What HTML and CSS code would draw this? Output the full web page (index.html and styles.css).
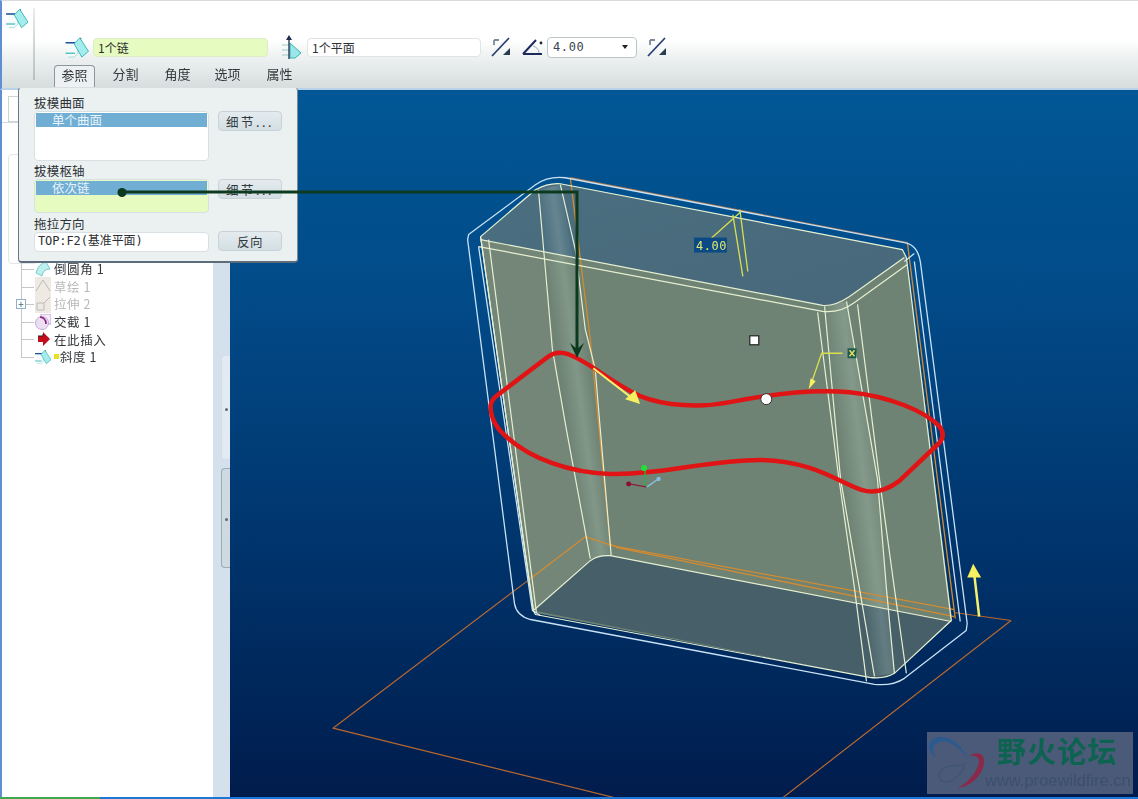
FILE: index.html
```html
<!DOCTYPE html>
<html lang="zh">
<head>
<meta charset="utf-8">
<title>拔模</title>
<link rel="stylesheet" href="styles.css">
</head>
<body>
<svg class="defs" width="0" height="0" aria-hidden="true">
  <symbol id="draft" viewBox="0 0 24 22">
    <path d="M3 6H13V17L9 21H3" fill="#f4fbfb" stroke="#8fd0d0" stroke-width=".8"/>
    <path d="M0 6H13L16 1" fill="none" stroke="#1f4f9a" stroke-width="1.7"/>
    <path d="M0 17H10" fill="none" stroke="#39b8b8" stroke-width="1.3"/>
    <path d="M15 1L24 15L17 21L9 7Z" fill="#a5ecec" stroke="#38b4b4" stroke-width="1"/>
  </symbol>
  <symbol id="flip" viewBox="0 0 20 20">
    <path d="M1 19L18 1" stroke="#2a3f75" stroke-width="1.8" fill="none"/>
    <path d="M3 3H8M3 3V8" stroke="#7c8a9a" stroke-width="1.8" fill="none"/>
    <path d="M19 18H12L19 11Z" fill="#2a3c50"/>
  </symbol>
</svg>
<div class="page">
  <header class="toolbar">
    <div class="toolbar-side">
      <svg class="icon-side"><use href="#draft"/></svg>
      <span class="toolbar-sep"></span>
    </div>
    <div class="toolbar-main">
      <div class="control-row">
        <svg class="icon-draft"><use href="#draft"/></svg>
        <div class="field field-green">1个链</div>
        <svg class="icon-pull" viewBox="0 0 22 24">
          <path d="M2 10H9M2 15H9M2 20H9" stroke="#9ccaca" stroke-width="1"/>
          <path d="M10 8L21 18L15 23H10Z" fill="#9be6e6" stroke="#38b4b4"/>
          <path d="M9 24V3" stroke="#1c2c4c" stroke-width="1.3"/>
          <path d="M9 0L6 5H12Z" fill="#1c2c4c"/>
        </svg>
        <div class="field field-white">1个平面</div>
        <svg class="icon-flip"><use href="#flip"/></svg>
        <svg class="icon-angle" viewBox="0 0 24 18">
          <path d="M1 16L14 2M1 16H20" stroke="#1f2a5c" stroke-width="2" fill="none"/>
          <path d="M11 8Q17 10 17 15" stroke="#9aa" fill="none"/>
          <circle cx="19" cy="5" r="1.4" fill="#223"/>
        </svg>
        <div class="select"><span>4.00</span><span class="caret"></span></div>
        <svg class="icon-flip icon-flip-end"><use href="#flip"/></svg>
      </div>
      <nav class="tabs">
        <span class="tab tab-active">参照</span>
        <span class="tab tab-split">分割</span>
        <span class="tab tab-angle">角度</span>
        <span class="tab tab-opt">选项</span>
        <span class="tab tab-prop">属性</span>
      </nav>
    </div>
  </header>

  <main class="workspace">
    <aside class="tree-panel">
      <div class="panel-tab"></div>
      <div class="panel-rule"></div>
      <div class="panel-box"></div>
      <ul class="tree">
        <li class="tree-row"><svg class="t-icon" viewBox="0 0 16 16"><path d="M1 12Q3 3 11 1L15 8Q8 8 7 15Z" fill="#bfeeee" stroke="#7cc"/></svg><span>倒圆角 1</span></li>
        <li class="tree-row is-muted"><svg class="t-icon" viewBox="0 0 16 18" preserveAspectRatio="none"><rect width="16" height="18" fill="#eee9e2"/><path d="M1 14L8 3L15 14" fill="none" stroke="#bbb"/></svg><span>草绘 1</span></li>
        <li class="tree-row is-muted"><span class="plus">+</span><svg class="t-icon" viewBox="0 0 16 18" preserveAspectRatio="none"><rect width="16" height="18" fill="#eee9e2"/><path d="M2 15V8H9L15 2M9 8V15H2" fill="none" stroke="#bbb"/></svg><span>拉伸 2</span></li>
        <li class="tree-row"><svg class="t-icon" viewBox="0 0 16 16"><rect x="6" y="0" width="10" height="10" fill="#f5ecf8" stroke="#b9a4d8"/><circle cx="7" cy="9" r="6.5" fill="#ecdff2" stroke="#c3a9d8"/><path d="M5 3Q11 4 11 10" fill="none" stroke="#8a1f7f" stroke-width="1.6"/></svg><span>交截 1</span></li>
        <li class="tree-row"><svg class="t-icon" viewBox="0 0 16 16"><path d="M3 5H8V1L15 8L8 15V11H3Z" fill="#c40d1c"/><path d="M3 5H8V3" fill="none" stroke="#222"/></svg><span>在此插入</span></li>
        <li class="tree-row"><svg class="t-icon" viewBox="0 0 24 22"><use href="#draft"/></svg><span class="star"></span><span>斜度 1</span></li>
      </ul>
    </aside>
    <div class="splitter">
      <span class="grip grip-a"></span>
      <span class="grip grip-b"></span>
    </div>
    <section class="viewport">
      <svg class="model" viewBox="230 90 908 709" xmlns="http://www.w3.org/2000/svg">
        <defs>
          <linearGradient id="stripe-l" gradientUnits="userSpaceOnUse" x1="560" y1="375" x2="590" y2="371">
            <stop offset="0" stop-color="#cfe6d6" stop-opacity="0"/>
            <stop offset=".55" stop-color="#cfe6d6" stop-opacity=".2"/>
            <stop offset="1" stop-color="#cfe6d6" stop-opacity="0"/>
          </linearGradient>
          <linearGradient id="stripe-r" gradientUnits="userSpaceOnUse" x1="846" y1="494" x2="886" y2="489">
            <stop offset="0" stop-color="#cfe6d6" stop-opacity="0"/>
            <stop offset=".5" stop-color="#cfe6d6" stop-opacity=".22"/>
            <stop offset="1" stop-color="#cfe6d6" stop-opacity="0"/>
          </linearGradient>
          <linearGradient id="topface" x1="0" y1="0" x2="1" y2="1">
            <stop offset="0" stop-color="#4b6f80"/>
            <stop offset="1" stop-color="#47687a"/>
          </linearGradient>
        </defs>
        <path class="ln-plane" d="M530 580L332 730L640 806M1012 622L775 806"/>
        <path class="body" d="M480 238L535 190Q548 183 560 184L903 250L908 262L953 622L895 675Q885 681 870 679L533 614Z"/>
        <path class="left-wall" d="M480 240L540 250L566 430L590 560L533 612Z"/>
        <path class="topface" d="M480 237L535 190Q548 183 560 184L903 250L905 258L850 297Q835 307 823 306L480 240Z"/>
        <path class="bottomface" d="M533 612L590 562Q598 556 610 557L952 623L895 675Q885 681 870 679Z"/>
        <path class="stripe-left" d="M538 190L560 185L585 330L600 430L611 557L590 560L566 430L552 350Z"/>
        <path class="stripe-right" d="M825 306L847 302L878 480L895 675L875 678L841 480Z"/>

        <path class="ln-orange-dim" d="M570 178L908 243"/>
        <path class="ln-orange" d="M570 178L590 340L610 545L617 549L955 618"/>
        <path class="ln-orange" d="M585 538L612 547L955 611M908 243L956 620"/>
        <path class="ln-orange" d="M530 580L585 538"/>
        <path class="ln-plane" d="M955 614L1012 622"/>

        <path class="ln-blue" d="M467 240L468 235L535 185Q548 176 565 178L905 243Q918 245 921 262L968 625L967 632L905 680Q893 688 875 686L530 621Q516 617 514 605Z"/>
        <path class="ln-blue" d="M478 247L532 612L540 617M915 262L961 623"/>
        <path class="ln-blue" d="M905 262L915 254"/>
        <path class="ln-cream" d="M480 237L535 190Q548 183 560 184L903 250L907 258L952 622L895 675Q885 681 870 679L535 616L533 612Z"/>
        <path class="ln-cream" d="M480 240L823 306Q835 307 850 297L905 258"/>
        <path class="ln-cream" d="M478 247L823 312Q840 314 855 303L908 265"/>
        <path class="ln-cream" d="M480 237L533 612M488 240L536 614"/>
        <path class="ln-cream" d="M533 612L590 562Q598 556 610 557L952 623"/>
        <path class="ln-cream" d="M538 190L552 350L566 430L590 560"/>
        <path class="ln-cream" d="M560 185L575 250L585 330L595 370L600 430L611 557"/>
        <path class="ln-cream" d="M818 313L838 470L855 590L867 683"/>
        <path class="ln-cream" d="M825 307L841 480L860 590L875 678"/>
        <path class="ln-cream" d="M847 302L878 480L887 590L895 675"/>
        <path class="ln-cream" d="M858 305L880 480L895 590L907 675"/>

        <path class="ln-yellow" d="M733 215L743 277M740 210L748 272M710 240L741 212"/>
        <rect class="dim-box" x="694" y="238" width="33" height="15"/>
        <text class="dim-text" x="696" y="250">4.00</text>
        <path class="ln-yellow" d="M843 354H822L811 386"/>
        <path class="fill-yellow" d="M809 390L811 379L816 382Z"/>
        <rect class="tag" x="848" y="349" width="9" height="10"/>
        <path class="tag-mark" d="M850 351L855 357M855 351L850 357"/>

        <path class="red-curve" d="M490 407Q491 400 497 396L547 358Q556 351 568 355C590 363 610 383 640 397C665 407 700 409 730 403C770 395 815 390 850 393C890 397 925 412 940 427Q947 436 940 444L900 482Q880 497 862 491C840 484 815 462 760 461C710 461 660 476 610 475C570 474 530 460 505 437Q490 424 490 407Z"/>
        <path class="ln-arrow ln-arrow-thin" d="M593 369L632 399"/>
        <path class="fill-yellow" d="M640 405L625 400L635 391Z"/>
        <circle class="drag-circle" cx="766.500" cy="400" r="5.500"/>
        <rect class="drag-square" x="750" y="336.500" width="9" height="9"/>
        <path class="ln-arrow" d="M975 575L980 618"/>
        <path class="fill-yellow" d="M974 565L982 579H968Z"/>

        <path class="cs-g" d="M645 488V471"/>
        <circle class="cs-g-dot" cx="644" cy="469" r="3"/>
        <path class="cs-r" d="M646 488L629 485"/>
        <circle class="cs-r-dot" cx="628.500" cy="485" r="2.500"/>
        <path class="cs-b" d="M647 488L658 480"/>
        <circle class="cs-b-dot" cx="658.500" cy="480" r="2.200"/>
      </svg>
      <div class="watermark">
        <svg class="wm-logo" viewBox="0 0 60 62">
          <path class="wm-blue" d="M41 28C36 14 24 4 14 5C6 5 1 10 2 16C3 21 6 24 9 25C5 20 5 13 12 10C22 7 34 16 41 28Z"/>
          <path class="wm-red" d="M42 24C48 20 56 20 57 28C58 40 46 54 31 56C42 50 50 40 52 30C52 24 47 23 42 24Z"/>
          <path class="wm-gray" d="M38 30C37 38 32 44 26 48C20 52 11 50 12 42C14 34 26 33 36 33"/>
        </svg>
        <div class="wm-text">
          <div class="wm-title">野火论坛</div>
          <div class="wm-url">www.proewildfire.cn</div>
        </div>
      </div>
    </section>
  </main>
  <footer class="statusbar"><span class="status-green"></span></footer>

  <div class="popup">
    <div class="popup-label">拔模曲面</div>
    <div class="popup-line">
      <div class="listbox listbox-tall"><div class="list-sel">单个曲面</div></div>
      <button class="btn btn-wide">细节...</button>
    </div>
    <div class="popup-label popup-label-2">拔模枢轴</div>
    <div class="popup-line">
      <div class="listbox listbox-green"><div class="list-sel">依次链</div></div>
      <button class="btn btn-wide">细节...</button>
    </div>
    <div class="popup-label popup-label-3">拖拉方向</div>
    <div class="popup-line">
      <div class="listbox listbox-input">TOP:F2(基准平面)</div>
      <button class="btn btn-flip">反向</button>
    </div>
  </div>

  <svg class="callout" viewBox="0 0 1138 799">
    <path class="callout-line" d="M122 192H577V352"/>
    <circle class="callout-dot" cx="122" cy="192.500" r="4.500"/>
    <path class="callout-head" d="M570 343L577 349L584 343L577 358Z"/>
  </svg>
</div>
</body>
</html>
```

FILE: styles.css
```css
* { box-sizing: border-box; }
html, body { margin: 0; padding: 0; }
body {
  width: 1138px;
  height: 799px;
  overflow: hidden;
  background: #fff;
  font-family: "Noto Sans CJK SC", "Liberation Sans", sans-serif;
  font-size: 12.500px;
  color: #2b2f33;
}
.defs { position: absolute; }
.page {
  position: relative;
  width: 1138px;
  height: 799px;
  display: flex;
  flex-direction: column;
  filter: blur(.45px);
}

/* toolbar */
.toolbar {
  height: 90px;
  flex: none;
  display: flex;
  border-top: 1px solid #d8dcdf;
  border-left: 2px solid #5f8fd0;
  border-bottom: 2px solid #b9d2ea;
  background: linear-gradient(#fff 0, #fff 45%, #eef1f1 65%, #d6dddd 100%);
}
.toolbar-side {
  width: 52px;
  flex: none;
  display: flex;
  padding: 7px 0 0 4px;
  gap: 5px;
}
.icon-side { width: 22px; height: 21px; }
.toolbar-sep {
  width: 2px;
  height: 72px;
  background: linear-gradient(#e8ecec, #b7bfc0);
}
.toolbar-main { flex: 1; display: flex; flex-direction: column; }
.control-row {
  height: 20px;
  margin-top: 36px;
  padding-left: 11px;
  display: flex;
  align-items: center;
}
.icon-draft { width: 24px; height: 21px; margin-right: 4px; flex: none; }
.field {
  height: 19px;
  border-radius: 4px;
  line-height: 17px;
  padding-left: 4px;
  font-size: 12px;
  flex: none;
}
.field-green { width: 175px; background: #e6fbbf; border: 1px solid #dfeccb; }
.field-white { width: 174px; background: #fff; border: 1px solid #e0e4e4; }
.icon-pull { width: 22px; height: 24px; margin: 0 5px 0 12px; flex: none; }
.icon-flip { width: 20px; height: 20px; margin-left: 10px; flex: none; }
.icon-flip-end { margin-left: 10px; }
.icon-angle { width: 24px; height: 18px; margin: 0 1px 0 11px; flex: none; }
.select {
  width: 90px;
  height: 21px;
  flex: none;
  border: 1px solid #bcc6c8;
  border-radius: 4px;
  background: #fff;
  display: flex;
  align-items: center;
  justify-content: space-between;
  padding: 0 8px 0 5px;
  font-family: "DejaVu Sans Mono", monospace;
  font-size: 12px;
  letter-spacing: .6px;
  color: #3c4650;
}
.caret {
  width: 0;
  height: 0;
  border-left: 3.500px solid transparent;
  border-right: 3.500px solid transparent;
  border-top: 4px solid #222;
}
.tabs {
  display: flex;
  margin-top: 8px;
  height: 23px;
  font-size: 13px;
}
.tab {
  width: 27px;
  text-align: center;
  line-height: 17px;
  color: #33383c;
}
.tab-split { margin-left: 17px; }
.tab-angle { margin-left: 25px; }
.tab-opt { margin-left: 23px; }
.tab-prop { margin-left: 25px; }
.tab-active {
  width: 41px;
  height: 23px;
  border: 1px solid #8a979c;
  border-bottom: none;
  border-radius: 4px 4px 0 0;
  background: #eef1f2;
}

/* workspace */
.workspace { flex: 1; display: flex; min-height: 0; }
.tree-panel {
  width: 213px;
  flex: none;
  background: #fff;
  border-left: 2px solid #5f8fd0;
  position: relative;
  padding-top: 170px;
}
.panel-tab {
  position: absolute;
  left: 6px;
  top: 6px;
  width: 20px;
  height: 26px;
  background: #fff;
  border: 1px solid #ccd3d8;
}
.panel-rule {
  position: absolute;
  left: 0;
  top: 32px;
  width: 30px;
  border-top: 1px solid #d3d9dd;
}
.panel-box {
  position: absolute;
  left: 6px;
  top: 64px;
  width: 30px;
  height: 110px;
  border: 1px solid #e2e6e9;
  border-radius: 4px;
}
.tree {
  list-style: none;
  margin: 0;
  padding: 0 0 0 19px;
  position: relative;
}
.tree::before {
  content: "";
  position: absolute;
  left: 19px;
  top: -4px;
  bottom: 9px;
  border-left: 1px solid #c6c6c6;
}
.tree-row {
  height: 17.600px;
  display: flex;
  align-items: center;
  position: relative;
  padding-left: 14px;
  font-size: 12.500px;
  white-space: pre;
  letter-spacing: .6px;
  color: #33373b;
}
.tree-row::before {
  content: "";
  position: absolute;
  left: 0;
  top: 9px;
  width: 13px;
  border-top: 1px solid #c6c6c6;
}
.t-icon { width: 16px; height: 16px; margin-right: 3px; flex: none; position: relative; }
.is-muted { color: #b8b8b8; }
.is-muted .t-icon { height: 18px; }
.plus {
  position: absolute;
  left: -5px;
  top: 4px;
  width: 10px;
  height: 10px;
  border: 1px solid #8fb0c8;
  background: #fff;
  color: #467;
  font-size: 10px;
  line-height: 8px;
  text-align: center;
  z-index: 1;
  letter-spacing: 0;
}
.star {
  width: 5px;
  height: 5px;
  background: #e8e020;
  margin-right: 1px;
  flex: none;
}
.splitter {
  width: 17px;
  flex: none;
  background: #d4e1ec;
  position: relative;
}
.grip {
  position: absolute;
  left: 8px;
  width: 9px;
  background: #dfe8ef;
  border: 1px solid #bccad4;
  border-right: none;
  border-radius: 4px 0 0 4px;
}
.grip::after {
  content: "";
  position: absolute;
  left: 3px;
  top: 50%;
  width: 3px;
  height: 3px;
  border-radius: 50%;
  background: #5d6a74;
}
.grip-a { top: 265px; height: 105px; background: #e2ebf2; border-color: #d2dee8; }
.grip-b { top: 378px; height: 100px; background: #cfd9e0; border-color: #9aabb8; }

/* viewport */
.viewport {
  flex: 1;
  position: relative;
  background: linear-gradient(#015795 0, #024a88 30%, #003269 68%, #001c4c 100%);
  overflow: hidden;
}
.model { display: block; width: 908px; height: 707px; }
.model path { fill: none; stroke-linejoin: round; }
.model .body { fill: #6e8373; }
.model .left-wall { fill: #748677; }
.model .topface { fill: url(#topface); }
.model .bottomface { fill: #465f69; }
.model .stripe-left { fill: url(#stripe-l); }
.model .stripe-right { fill: url(#stripe-r); }
.ln-plane { stroke: #b8682e; stroke-width: 1.200; }
.ln-orange { stroke: #d28b32; stroke-width: 1.300; }
.ln-orange-dim { stroke: #a8764e; stroke-width: 1.300; }
.ln-blue { stroke: #c9e2f4; stroke-width: 1.300; }
.ln-cream { stroke: #e6efd2; stroke-width: 1.200; }
.ln-yellow { stroke: #d8e050; stroke-width: 1.300; }
.ln-arrow { stroke: #f4f070; stroke-width: 2.500; }
.ln-arrow-thin { stroke-width: 2px; }
.model .fill-yellow { fill: #f6f060; }
.dim-box { fill: #0b4a84; }
.dim-text {
  font-family: "DejaVu Sans Mono", monospace;
  font-size: 12px;
  letter-spacing: .6px;
  fill: #e4e870;
}
.tag { fill: #1f5a50; }
.tag-mark { stroke: #e4e060; stroke-width: 1.500; }
.red-curve { stroke: #e01414; stroke-width: 4.500; }
.drag-circle { fill: #fff; stroke: #333; stroke-width: 1; }
.drag-square { fill: #fff; stroke: #222; stroke-width: 1.200; }
.cs-g { stroke: #2fae4a; stroke-width: 1.300; }
.cs-r { stroke: #8a1f3a; stroke-width: 1.300; }
.cs-b { stroke: #8fc0e0; stroke-width: 1.300; }
.cs-g-dot { fill: #22e03a; }
.cs-r-dot { fill: #8a0f30; }
.cs-b-dot { fill: #86bce0; }

.watermark {
  position: absolute;
  right: 5px;
  bottom: 3px;
  width: 206px;
  height: 62px;
  background: #4b5a78;
  display: flex;
}
.wm-logo { width: 60px; height: 62px; flex: none; }
.wm-blue { fill: #2d5a8e; }
.wm-red { fill: #8a2a4a; }
.wm-gray { fill: none; stroke: #3f5577; stroke-width: 1.500; }
.wm-text { margin-left: -2px; padding-top: 3px; }
.wm-title {
  font-weight: 700;
  font-size: 29px;
  line-height: 30px;
  letter-spacing: 1.200px;
  color: #0c6350;
  margin-left: 12px;
  white-space: nowrap;
}
.wm-url {
  font-family: "Liberation Sans", sans-serif;
  font-size: 16.500px;
  line-height: 20px;
  color: #3b506b;
  margin-top: 5px;
  white-space: nowrap;
}

.statusbar {
  height: 2px;
  flex: none;
  background: #1c78d8;
}
.status-green { display: block; width: 100px; height: 2px; background: #3ca850; }

/* popup */
.popup {
  position: absolute;
  left: 18px;
  top: 87px;
  width: 280px;
  height: 176px;
  background: #ebf0f1;
  border: 1px solid #d8dfe3;
  border-left-color: #6c7a86;
  border-bottom: 2px solid #5d6c7a;
  border-right-color: #7d8b96;
  border-radius: 4px;
  padding: 6px 15px 0 15px;
  font-size: 12.500px;
}
.popup-label {
  height: 17px;
  line-height: 17px;
  letter-spacing: .2px;
  color: #2d3237;
}
.popup-label-2 { margin-top: 1px; }
.popup-label-3 { margin-top: 2px; }
.popup-line {
  display: flex;
  justify-content: space-between;
  align-items: flex-start;
}
.listbox {
  width: 175px;
  background: #fff;
  border: 1px solid #d9e0e4;
  border-radius: 4px;
  padding: 1px;
}
.listbox-tall { height: 50px; }
.listbox-green { height: 34px; background: #e6fbbf; }
.listbox-input {
  height: 20px;
  line-height: 17px;
  padding: 0 3px;
  font-size: 12px;
  font-family: "DejaVu Sans Mono", "Noto Sans CJK SC", monospace;
  letter-spacing: -.1px;
  white-space: nowrap;
  overflow: hidden;
}
.list-sel {
  height: 14px;
  line-height: 13px;
  background: #70aed3;
  color: #e8f4fa;
  padding-left: 16px;
  font-size: 12.500px;
}
.btn {
  width: 64px;
  height: 20px;
  padding: 0;
  border: 1px solid #c9d2d6;
  border-radius: 4px;
  background: linear-gradient(#e4ebef, #d3dfe4);
  font-family: inherit;
  font-size: 12.500px;
  line-height: 17px;
  color: #33383c;
}
.btn-wide { letter-spacing: 2.500px; }
.btn-flip { letter-spacing: .5px; margin-top: -1px; }

/* callout arrow over the popup */
.callout {
  position: absolute;
  left: 0;
  top: 0;
  width: 1138px;
  height: 799px;
  pointer-events: none;
}
.callout-line { fill: none; stroke: #0c3a1e; stroke-width: 3; }
.callout-dot { fill: #0c3a1e; }
.callout-head { fill: #0c3a1e; }
```
